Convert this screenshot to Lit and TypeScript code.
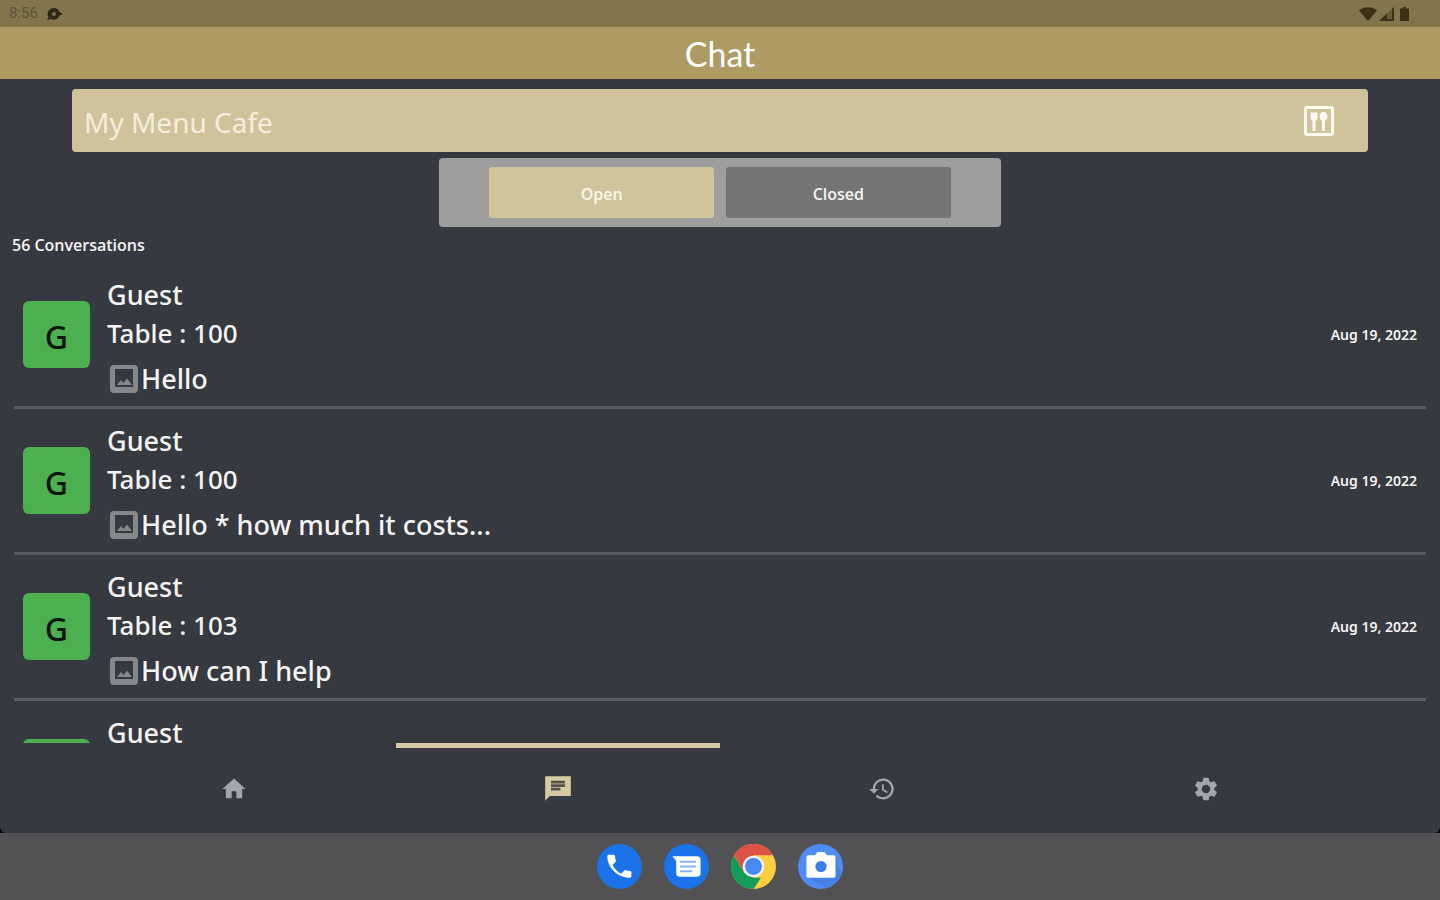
import { LitElement, html, css, svg } from "lit";
import { customElement, state } from "lit/decorators.js";
import { classMap } from "lit/directives/class-map.js";

interface Conversation {
  name: string;
  table: number;
  message: string;
  date: string;
}

const conversations: Conversation[] = [
  { name: "Guest", table: 100, message: "Hello", date: "Aug 19, 2022" },
  { name: "Guest", table: 100, message: "Hello * how much it costs...", date: "Aug 19, 2022" },
  { name: "Guest", table: 103, message: "How can I help", date: "Aug 19, 2022" },
  { name: "Guest", table: 103, message: "Hello", date: "Aug 19, 2022" },
];

const tabs = [
  { id: "home", label: "Home", icon: svg`<path d="M10 20v-6h4v6h5v-8h3L12 3 2 12h3v8z"/>` },
  {
    id: "chat",
    label: "Chat",
    icon: svg`<path d="M1 1h22v17H5l-4 4z"/><path fill="#55534b" d="M6 5h12v2.300H6zM6 8h12v2.300H6zM6 11h8v2.300H6z"/>`,
  },
  {
    id: "history",
    label: "History",
    icon: svg`<path d="M13 3a9 9 0 0 0-9 9H1l3.890 3.890.07.14L9 12H6a7 7 0 1 1 2.060 4.940l-1.420 1.420A9 9 0 1 0 13 3zm-1 5v5l4.280 2.540.72-1.210-3.500-2.080V8z"/>`,
  },
  {
    id: "settings",
    label: "Settings",
    icon: svg`<path d="M19.140 12.940c.04-.3.06-.61.06-.94 0-.32-.02-.64-.07-.94l2.030-1.580a.49.49 0 0 0 .12-.61l-1.920-3.320a.488.488 0 0 0-.59-.22l-2.390.96c-.5-.38-1.030-.7-1.620-.94l-.36-2.540a.484.484 0 0 0-.48-.41h-3.840c-.24 0-.43.17-.47.41l-.36 2.540c-.59.24-1.130.57-1.620.94l-2.390-.96c-.22-.08-.47 0-.59.22L2.740 8.870c-.12.21-.08.47.12.61l2.030 1.580c-.05.3-.09.63-.09.94s.02.64.07.94l-2.030 1.580a.49.49 0 0 0-.12.61l1.920 3.320c.12.22.37.29.59.22l2.390-.96c.5.38 1.030.7 1.620.94l.36 2.540c.05.24.24.41.48.41h3.840c.24 0 .44-.17.47-.41l.36-2.540c.59-.24 1.130-.56 1.620-.94l2.390.96c.22.08.47 0 .59-.22l1.920-3.320c.12-.22.07-.47-.12-.61zM12 15.600A3.600 3.600 0 1 1 12 8.400a3.600 3.600 0 0 1 0 7.200z"/>`,
  },
];

const apps = [
  {
    label: "Phone",
    art: svg`<circle cx="24" cy="24" r="24" fill="#1a73e8"/><path fill="#fff" d="M12.500 11.500h5.200c.8 0 1.400.6 1.500 1.300.1 1.800.4 3.400.9 5 .2.500 0 1.100-.4 1.500l-3.200 3.100c2.200 4.300 5.200 7.100 9.200 9.200l3.100-3.200c.4-.4 1-.5 1.500-.4 1.600.5 3.200.8 5 .9.800 0 1.400.6 1.400 1.400v4.200c0 .9-.6 1.500-1.400 1.500C22 36 11 25 11 13c0-.9.600-1.500 1.500-1.500z"/>`,
  },
  {
    label: "Messages",
    art: svg`<circle cx="24" cy="24" r="24" fill="#1a73e8"/><path fill="#fff" d="M9 13h26a4 4 0 0 1 4 4v14a4 4 0 0 1-4 4H17a4 4 0 0 1-4-4V18z"/><path stroke="#8ab4f8" stroke-width="2.200" d="M17 19h17M17 24h17M17 29h13"/>`,
  },
  {
    label: "Chrome",
    art: svg`<circle cx="24" cy="24" r="24" fill="#ffcd40"/><path fill="#109d58" d="M3.200 12 13.600 30 24 36h8L24 48A24 24 0 0 1 3.200 12z"/><path fill="#de5145" d="M3.200 12A24 24 0 0 1 44.800 12H24L13.600 30z"/><circle cx="24" cy="24" r="11.500" fill="#f1f1f1"/><circle cx="24" cy="24" r="9" fill="#4688f4"/>`,
  },
  {
    label: "Camera",
    art: svg`<circle cx="24" cy="24" r="24" fill="#4f8df5"/><path fill="#4580e4" d="m40 14 6.500 18A24 24 0 0 1 30 47L10 36z"/><path fill="#fff" d="M11 12h7l3-3.500h7l3 3.500h7a2 2 0 0 1 2 2v20a2 2 0 0 1-2 2H11a2 2 0 0 1-2-2V14c0-1.100.9-2 2-2z"/><circle cx="24.500" cy="24" r="6" fill="#3f7de8"/>`,
  },
];

@customElement("app-root")
export class AppRoot extends LitElement {
  static styles = css`
    :host {
      display: flex;
      flex-direction: column;
      height: 100vh;
      overflow: hidden;
      background: #000;
      color: #f4f4f4;
      font-family: "Open Sans", "Noto Sans", sans-serif;
    }
    * { box-sizing: border-box; }
    button, input { font: inherit; border: 0; padding: 0; color: inherit; }
    svg { display: block; flex: none; }
    .status {
      flex: none;
      height: 27px;
      padding: 0 31px 0 9px;
      display: flex;
      align-items: center;
      justify-content: space-between;
      background: #82754c;
      color: #5d5334;
      font: 15px/27px Roboto, sans-serif;
    }
    .group { display: flex; align-items: center; gap: 8px; }
    .signals { gap: 2px; }
    .signals svg:last-child { margin-left: 4px; }
    .title {
      flex: none;
      height: 52px;
      margin: 0;
      text-align: center;
      background: #ae9b64;
      color: #fff;
      font: 34px/54px Lato, sans-serif;
    }
    .screen {
      flex: 1;
      min-height: 0;
      display: flex;
      flex-direction: column;
      background: #36393f;
      border-radius: 0 0 6px 6px;
    }
    .venue {
      flex: none;
      width: 90%;
      height: 63px;
      margin: 10px auto 6px;
      padding: 0 33px 0 12px;
      display: flex;
      align-items: center;
      border-radius: 4px;
      background: #cfc39b;
      color: #f5eedc;
    }
    .venue input {
      flex: 1;
      min-width: 0;
      padding-top: 2px;
      background: none;
      font-family: "Noto Sans", sans-serif;
      font-size: 28px;
      line-height: 38px;
      outline: none;
    }
    .venue button { background: none; color: #fffaf0; }
    .switch {
      flex: none;
      width: 39%;
      margin: 0 auto;
      padding: 9px 0;
      display: flex;
      justify-content: center;
      gap: 12px;
      border-radius: 4px;
      background: #9e9e9e;
    }
    .switch button {
      width: 40%;
      height: 51px;
      padding-top: 2px;
      border-radius: 3px;
      background: #757575;
      font-size: 16px;
      font-weight: 600;
    }
    .switch .on { background: #d0c49a; color: #fbf6ea; }
    .count {
      flex: none;
      margin: 0;
      padding: 6px 12px;
      font-size: 16px;
      line-height: 24px;
      font-weight: 600;
    }
    .list {
      flex: 1;
      min-height: 0;
      margin: 0;
      padding: 0 14px;
      list-style: none;
      overflow: hidden;
      font-family: "Noto Sans", sans-serif;
    }
    .row {
      display: flex;
      align-items: center;
      gap: 17px;
      padding: 0 9px;
      border-bottom: 3px solid #585b60;
    }
    .avatar {
      flex: none;
      width: 67px;
      height: 67px;
      border-radius: 6px;
      background: #4caf50;
      color: #08150a;
      text-align: center;
      font-size: 32px;
      line-height: 72px;
      font-weight: 500;
    }
    .body { flex: 1; min-width: 0; padding-top: 13px; font-size: 27px; font-weight: 500; }
    .line { line-height: 38px; }
    .table { font-size: 26px; }
    .message { display: flex; align-items: center; gap: 3px; line-height: 54px; padding-left: 3px; }
    .message svg { color: #85878a; }
    .date { font-size: 14px; line-height: 20px; font-weight: 600; }
    .nav { flex: none; width: 90%; margin: 0 auto; display: flex; }
    .tab {
      flex: 1;
      height: 90px;
      padding-bottom: 3px;
      display: flex;
      justify-content: center;
      align-items: center;
      background: none;
      color: #a4a6a9;
      border-top: 5px solid transparent;
    }
    .tab.active { color: #d6caa0; border-top-color: #d6caa0; }
    .dock {
      flex: none;
      height: 67px;
      display: flex;
      justify-content: center;
      align-items: center;
      gap: 22px;
      background: #525254;
    }
    .dock button { background: none; border-radius: 50%; }
  `;

  @state() private filter = "Open";
  @state() private tab = "chat";

  render() {
    return html`
      <div class="status">
        <div class="group">
          <span>8:56</span>
          <svg width="17" height="14" viewBox="0 0 17 14" fill="#2d2817"><path fill-rule="evenodd" d="M8 1a6 6 0 0 1 5.500 4L17 7l-3.500 1.500A6 6 0 0 1 5 12l-4 1 1.500-3A6 6 0 0 1 8 1zm0 4a2 2 0 1 0 0 4 2 2 0 0 0 0-4z"/></svg>
        </div>
        <div class="group signals">
          <svg width="18" height="14" viewBox="0 0 18 14" fill="#3a3117"><path d="M9 14 0 3.500a14 14 0 0 1 18 0z"/></svg>
          <svg width="15" height="14" viewBox="0 0 15 14" fill="#3a3117"><path opacity=".35" d="M15 0v14H0z"/><path d="M8 6.500V14H0zM13 1.900 15 0v14H8v-2h5z"/></svg>
          <svg width="9" height="14" viewBox="0 0 9 14" fill="#3a3117"><path d="M3 0h3v1.500h3V14H0V1.500h3z"/></svg>
        </div>
      </div>
      <h1 class="title">Chat</h1>
      <main class="screen">
        <div class="venue">
          <input type="text" aria-label="Restaurant" .value=${"My Menu Cafe"} />
          <button aria-label="Choose restaurant">
            <svg width="32" height="32" viewBox="0 0 32 32" fill="currentColor">
              <path fill-rule="evenodd" d="M4 1h24a3 3 0 0 1 3 3v24a3 3 0 0 1-3 3H4a3 3 0 0 1-3-3V4a3 3 0 0 1 3-3zm0 3v24h24V4z"/>
              <path d="M7.500 7.500h7V13c0 1.500-1 2.500-2 2.800V26h-3V15.800c-1-.3-2-1.300-2-2.800zM20.500 7c2.300 0 4 2 4 4.500 0 2-1 3.600-2.500 4.200V26h-3V15.700c-1.500-.6-2.500-2.200-2.500-4.200 0-2.500 1.700-4.500 4-4.500z"/>
            </svg>
          </button>
        </div>
        <div class="switch">
          ${["Open", "Closed"].map(
            (name) => html`<button class=${classMap({ on: this.filter === name })} @click=${() => (this.filter = name)}>${name}</button>`
          )}
        </div>
        <p class="count">56 Conversations</p>
        <ul class="list">
          ${conversations.map(
            (c) => html`<li class="row">
              <div class="avatar">${c.name[0]}</div>
              <div class="body">
                <div class="line">${c.name}</div>
                <div class="line table">Table : ${c.table}</div>
                <div class="message">
                  <svg width="28" height="28" viewBox="0 0 28 28" fill="currentColor">
                    <path fill-rule="evenodd" d="M4 0h20a4 4 0 0 1 4 4v20a4 4 0 0 1-4 4H4a4 4 0 0 1-4-4V4a4 4 0 0 1 4-4zm1 4v18h18V4z"/>
                    <path d="m7 20 4-5 2.500 3 3.500-4.500L22 20z"/>
                  </svg>
                  <span>${c.message}</span>
                </div>
              </div>
              <time class="date">${c.date}</time>
            </li>`
          )}
        </ul>
        <nav class="nav">
          ${tabs.map(
            (t) => html`<button class=${classMap({ tab: true, active: this.tab === t.id })} aria-label=${t.label} @click=${() => (this.tab = t.id)}>
              <svg width="28" height="28" viewBox="0 0 24 24" fill="currentColor">${t.icon}</svg>
            </button>`
          )}
        </nav>
      </main>
      <footer class="dock">
        ${apps.map((a) => html`<button aria-label=${a.label}><svg width="45" height="45" viewBox="0 0 48 48" fill="none">${a.art}</svg></button>`)}
      </footer>
    `;
  }
}
